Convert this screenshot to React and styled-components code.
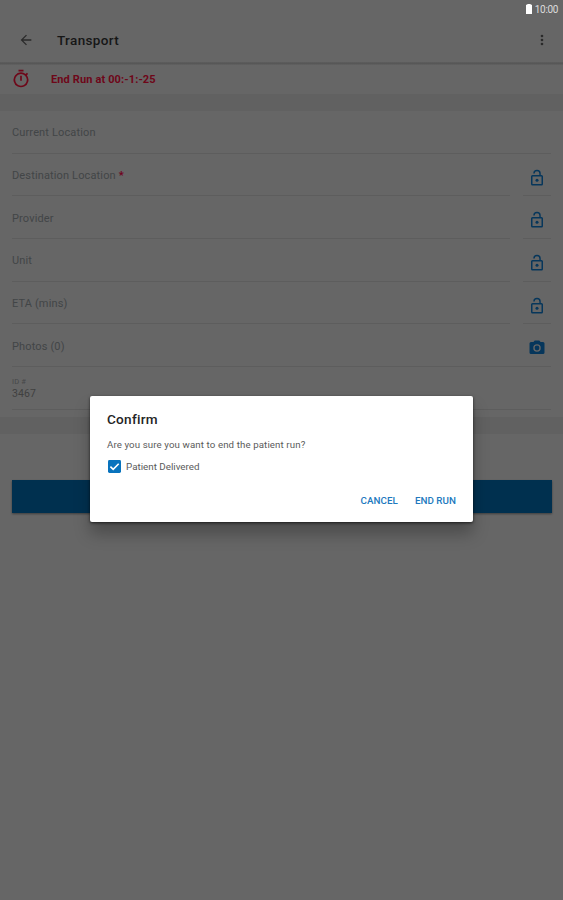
import React from "react";
import styled, { createGlobalStyle } from "styled-components";

const GlobalStyle = createGlobalStyle`
  * { box-sizing: border-box; }
  body { margin: 0; background: #666; font-family: Roboto, sans-serif; }
`;

const Screen = styled.div`
  position: relative;
  display: flex;
  flex-direction: column;
  width: 563px;
  height: 900px;
  overflow: hidden;
  background: #666;
`;

const StatusBar = styled.div`
  display: flex;
  justify-content: flex-end;
  align-items: center;
  gap: 3px;
  height: 18px;
  padding-right: 5px;
  color: #dcdcdc;
  font-size: 10px;
  letter-spacing: -0.35px;
`;

const AppBar = styled.header`
  display: flex;
  align-items: center;
  height: 44px;
  padding: 0 13px 0 18px;
  color: #2a2a2a;
`;

const Title = styled.h1`
  flex: 1;
  margin: 0 0 0 23px;
  color: #161616;
  font-size: 13.5px;
  font-weight: 500;
  letter-spacing: 0.36px;
`;

const Edge = styled.div`
  height: 3px;
  background: linear-gradient(#5e5e5e, #575757, #626262);
`;

const RunBar = styled.div`
  display: flex;
  align-items: center;
  gap: 20px;
  height: 29px;
  padding-left: 11px;
  color: #6e0719;
  font-size: 11px;
  font-weight: 700;
  letter-spacing: 0.13px;

  svg {
    margin-top: -2px;
  }
`;

const Band = styled.div`
  height: 17px;
  background: #616161;
`;

const Form = styled.main`
  display: grid;
  grid-template-rows: repeat(7, 42.7px);
  height: 306px;
  padding: 0 12px;
`;

const Row = styled.div`
  display: flex;
  gap: ${(p) => (p.$split ? "13px" : "0")};
`;

const Field = styled.div`
  flex: 1;
  display: flex;
  flex-direction: column;
  justify-content: center;
  padding-top: ${(p) => (p.$filled ? "1px" : "2px")};
  border-bottom: 1px solid #5d5d5d;
  color: #424547;
  font-size: 11px;
  letter-spacing: 0.14px;
`;

const Caption = styled.span`
  color: #464849;
  font-size: 7.5px;
  line-height: 10px;
`;

const Value = styled.span`
  color: #404040;
  font-size: 10.5px;
  line-height: 13px;
`;

const Required = styled.span`
  color: #70001c;
  font-weight: 700;
`;

const Action = styled.div`
  display: flex;
  align-items: center;
  justify-content: center;
  width: 28px;
  padding-top: 6px;
  border-bottom: 1px solid #5d5d5d;
  color: #06365b;
`;

const RunButton = styled.button`
  height: 33px;
  margin: 46px 11px 0 12px;
  border: 0;
  background: #00304f;
  box-shadow: 0 1px 2px rgba(0, 0, 0, 0.4);
`;

const Dialog = styled.section`
  position: absolute;
  top: 396px;
  left: 90px;
  display: flex;
  flex-direction: column;
  width: 383px;
  height: 126px;
  padding: 14px 17px 0;
  border-radius: 2px;
  background: #fff;
  box-shadow: 0 1px 3px rgba(0, 0, 0, 0.65), 0 12px 16px rgba(0, 0, 0, 0.26);
`;

const DialogTitle = styled.h2`
  margin: 0;
  color: #242424;
  font-size: 13.6px;
  font-weight: 500;
  line-height: 18px;
  letter-spacing: 0.25px;
`;

const Message = styled.p`
  margin: 10px 0 0;
  color: #5a5a5a;
  font-size: 9.7px;
  line-height: 13px;
  letter-spacing: 0.11px;
  white-space: nowrap;
`;

const CheckLabel = styled.label`
  display: flex;
  align-items: center;
  gap: 5px;
  margin: 9px 0 0 1px;
  color: #5a5a5a;
  font-size: 9.8px;
  line-height: 13px;
`;

const Actions = styled.div`
  display: flex;
  justify-content: flex-end;
  gap: 17px;
  margin-top: 22px;
`;

const TextButton = styled.button`
  padding: 0;
  border: 0;
  background: none;
  color: #2179be;
  font: 500 9.8px/12px Roboto, sans-serif;
  letter-spacing: 0.04px;
`;

const BackIcon = () => (
  <svg width="16" height="16" viewBox="0 0 24 24" fill="currentColor">
    <path d="M20 11H7.83l5.59-5.59L12 4l-8 8 8 8 1.41-1.41L7.83 13H20z" />
  </svg>
);

const MoreIcon = () => (
  <svg width="16" height="16" viewBox="0 0 24 24" fill="currentColor">
    <circle cx="12" cy="6" r="2" />
    <circle cx="12" cy="12" r="2" />
    <circle cx="12" cy="18" r="2" />
  </svg>
);

const TimerIcon = () => (
  <svg width="20" height="20" viewBox="0 0 24 24" fill="currentColor">
    <path d="M15 1H9v2h6zm-4 13h2V8h-2zm8.03-6.61 1.42-1.42a11 11 0 0 0-1.41-1.41l-1.42 1.42A8.96 8.96 0 0 0 12 4a9 9 0 1 0 7.03 3.39M12 20a7 7 0 1 1 0-14 7 7 0 0 1 0 14" />
  </svg>
);

const UnlockIcon = () => (
  <svg width="18" height="18" viewBox="0 0 24 24" fill="currentColor">
    <path d="M18 8h-1V6A5 5 0 0 0 7 6h1.9a3.1 3.1 0 0 1 6.2 0v2H6a2 2 0 0 0-2 2v10a2 2 0 0 0 2 2h12a2 2 0 0 0 2-2V10a2 2 0 0 0-2-2m0 12H6V10h12z" />
    <circle cx="12" cy="15" r="2" />
  </svg>
);

const CameraIcon = () => (
  <svg width="18" height="18" viewBox="0 0 24 24" fill="currentColor">
    <circle cx="12" cy="12" r="3.2" />
    <path d="M9 2 7.17 4H4a2 2 0 0 0-2 2v12a2 2 0 0 0 2 2h16a2 2 0 0 0 2-2V6a2 2 0 0 0-2-2h-3.17L15 2zm3 15a5 5 0 1 1 0-10 5 5 0 0 1 0 10" />
  </svg>
);

const BatteryIcon = () => (
  <svg width="6" height="10" viewBox="0 0 6 10" fill="#fff">
    <path d="M1.3 0h3.4v.7H6V10H0V.7h1.3z" />
  </svg>
);

const CheckIcon = () => (
  <svg width="13" height="13" viewBox="0 0 13 13">
    <rect width="13" height="13" rx="1.4" fill="#0873bd" />
    <path d="m2.4 6.6 2.8 2.8 5.5-5.6" fill="none" stroke="#fff" strokeWidth="1.6" />
  </svg>
);

const lockable = ["Destination Location", "Provider", "Unit", "ETA (mins)"];

export default function App() {
  return (
    <Screen>
      <GlobalStyle />
      <StatusBar>
        <BatteryIcon />
        10:00
      </StatusBar>
      <AppBar>
        <BackIcon />
        <Title>Transport</Title>
        <MoreIcon />
      </AppBar>
      <Edge />
      <RunBar>
        <TimerIcon />
        End Run at 00:-1:-25
      </RunBar>
      <Band />
      <Form>
        <Row>
          <Field>Current Location</Field>
        </Row>
        {lockable.map((name, index) => (
          <Row key={name} $split>
            <Field>
              <span>
                {name} {index === 0 && <Required>*</Required>}
              </span>
            </Field>
            <Action>
              <UnlockIcon />
            </Action>
          </Row>
        ))}
        <Row>
          <Field>Photos (0)</Field>
          <Action>
            <CameraIcon />
          </Action>
        </Row>
        <Row>
          <Field $filled>
            <Caption>ID #</Caption>
            <Value>3467</Value>
          </Field>
        </Row>
      </Form>
      <Band />
      <RunButton aria-label="End Run" />
      <Dialog role="dialog">
        <DialogTitle>Confirm</DialogTitle>
        <Message>Are you sure you want to end the patient run?</Message>
        <CheckLabel>
          <CheckIcon />
          Patient Delivered
        </CheckLabel>
        <Actions>
          <TextButton>CANCEL</TextButton>
          <TextButton>END RUN</TextButton>
        </Actions>
      </Dialog>
    </Screen>
  );
}
